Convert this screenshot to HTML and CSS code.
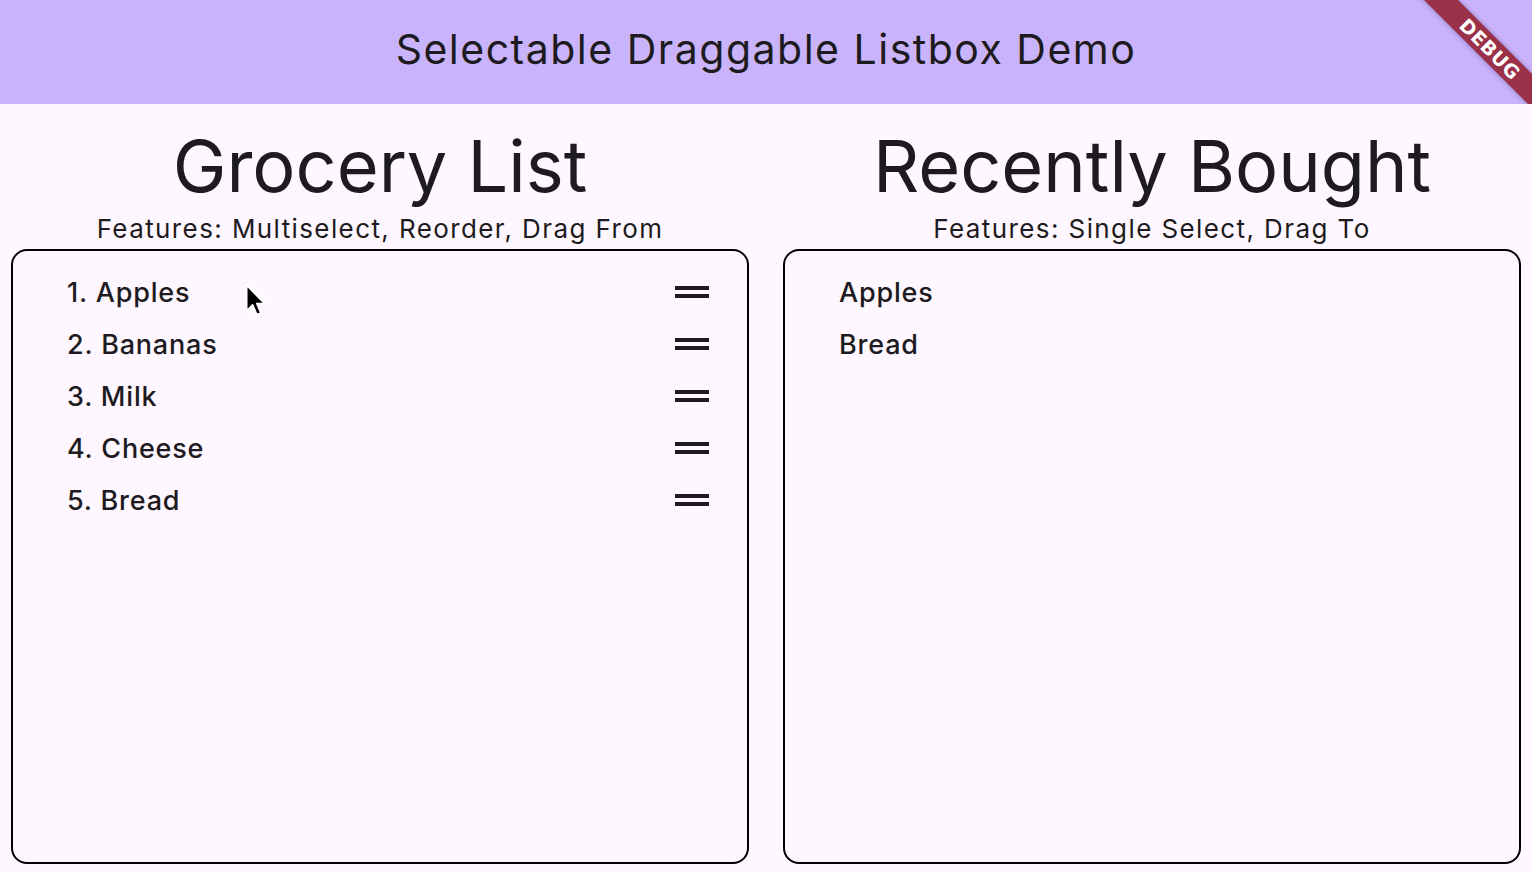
FILE: index.html
```html
<!DOCTYPE html>
<html>
<head>
<meta charset="utf-8">
<link rel="stylesheet" href="styles.css">
</head>
<body>
<header class="appbar">
  <h1 class="appbar-title">Selectable Draggable Listbox Demo</h1>
  <div class="banner"><div class="ribbon">DEBUG</div></div>
</header>
<main class="columns">
  <section class="col">
    <h2 class="title">Grocery List</h2>
    <p class="subtitle">Features: Multiselect, Reorder, Drag From</p>
    <div class="box">
      <ul class="list">
        <li class="item"><span class="label">1. Apples</span><svg class="handle" width="34" height="12" viewBox="0 0 34 12"><rect x="0" y="0" width="34" height="4"/><rect x="0" y="8" width="34" height="4"/></svg></li>
        <li class="item"><span class="label">2. Bananas</span><svg class="handle" width="34" height="12" viewBox="0 0 34 12"><rect x="0" y="0" width="34" height="4"/><rect x="0" y="8" width="34" height="4"/></svg></li>
        <li class="item"><span class="label">3. Milk</span><svg class="handle" width="34" height="12" viewBox="0 0 34 12"><rect x="0" y="0" width="34" height="4"/><rect x="0" y="8" width="34" height="4"/></svg></li>
        <li class="item"><span class="label">4. Cheese</span><svg class="handle" width="34" height="12" viewBox="0 0 34 12"><rect x="0" y="0" width="34" height="4"/><rect x="0" y="8" width="34" height="4"/></svg></li>
        <li class="item"><span class="label">5. Bread</span><svg class="handle" width="34" height="12" viewBox="0 0 34 12"><rect x="0" y="0" width="34" height="4"/><rect x="0" y="8" width="34" height="4"/></svg></li>
      </ul>
    </div>
  </section>
  <section class="col">
    <h2 class="title">Recently Bought</h2>
    <p class="subtitle">Features: Single Select, Drag To</p>
    <div class="box">
      <ul class="list">
        <li class="item"><span class="label">Apples</span></li>
        <li class="item"><span class="label">Bread</span></li>
      </ul>
    </div>
  </section>
</main>
<svg class="cursor" width="24" height="36" viewBox="0 0 22 32"><path d="M1.5 1.5 V25 L7 19.5 L10.8 28.5 L14.5 27 L10.8 18.3 L18 18.3 Z" fill="#000" stroke="#fff" stroke-width="1.6" stroke-linejoin="round"/></svg>
</body>
</html>
```
FILE: styles.css
```css
html, body {
  margin: 0;
  padding: 0;
}
body {
  width: 1532px;
  height: 872px;
  overflow: hidden;
  background: #fef7ff;
  color: #1d1b20;
  font-family: Inter, "Noto Sans", sans-serif;
  display: flex;
  flex-direction: column;
  position: relative;
}
.appbar {
  height: 104px;
  flex: 0 0 104px;
  background: #c9b4fb;
  display: flex;
  align-items: center;
  justify-content: center;
  position: relative;
  overflow: hidden;
}
.appbar-title {
  margin: 0;
  font-size: 41px;
  font-weight: 400;
  line-height: 48px;
  letter-spacing: 1.5px;
  margin-top: -6px;
}
.banner {
  position: absolute;
  top: 0;
  right: 0;
  width: 130px;
  height: 130px;
  overflow: hidden;
}
.ribbon {
  position: absolute;
  left: -12px;
  top: 37px;
  width: 200px;
  height: 24px;
  transform: rotate(45deg);
  background: #9b3049;
  box-shadow: 0 0 5px rgba(60, 30, 120, 0.45);
  color: #fff;
  font-family: "DejaVu Sans", "Liberation Sans", sans-serif;
  font-weight: 700;
  font-size: 19px;
  line-height: 24px;
  text-align: center;
  letter-spacing: 0.5px;
}
.columns {
  flex: 1;
  display: grid;
  grid-template-columns: 1fr 1fr;
  column-gap: 34px;
  padding: 0 11px 8px 11px;
  min-height: 0;
}
.col {
  display: flex;
  flex-direction: column;
  align-items: stretch;
  min-height: 0;
}
.title {
  margin: 26px 0 0 0;
  font-size: 72px;
  font-weight: 400;
  line-height: 72px;
  text-align: center;
}
.subtitle {
  margin: 12px 0 0 0;
  font-size: 26px;
  line-height: 30px;
  letter-spacing: 1.4px;
  text-align: center;
}
.box {
  margin-top: 5px;
  flex: 1;
  border: 2px solid #000;
  border-radius: 16px;
}
.list {
  list-style: none;
  margin: 0;
  padding: 16px 38px 0 54px;
}
.item {
  height: 52px;
  display: flex;
  align-items: center;
  justify-content: space-between;
}
.label {
  font-size: 27px;
  font-weight: 500;
  line-height: 52px;
  letter-spacing: 0.8px;
}
.handle {
  fill: #1d1b20;
  margin-top: -2px;
}
.cursor {
  position: absolute;
  left: 245px;
  top: 283px;
}
```
